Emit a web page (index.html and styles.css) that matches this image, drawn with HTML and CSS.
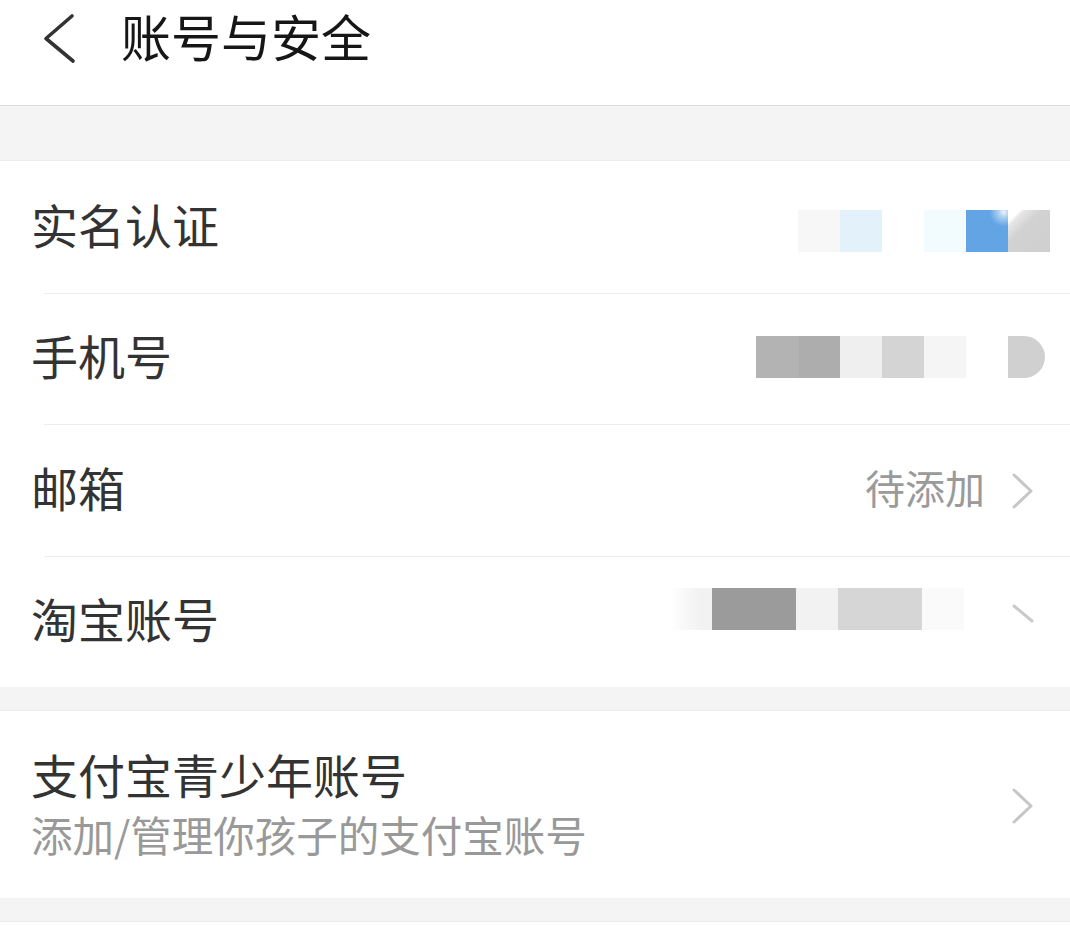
FILE: index.html
```html
<!DOCTYPE html>
<html lang="zh-CN">
<head>
<meta charset="utf-8">
<title>账号与安全</title>
<link rel="stylesheet" href="styles.css">
</head>
<body>
<header class="topbar">
  <svg class="back" viewBox="0 0 40 52" width="40" height="52" aria-hidden="true">
    <polyline points="32,4 6,26.5 33,49" fill="none" stroke="#333" stroke-width="3.6" stroke-linecap="round" stroke-linejoin="round"/>
  </svg>
  <h1 class="title">账号与安全</h1>
</header>
<div class="band band-top"></div>
<section class="group">
  <div class="row">
    <span class="label">实名认证</span>
    <div class="mosaic mosaic-1">
      <i class="px" style="background:#f7f7f7"></i><i class="px" style="background:#e3f1fb"></i><i class="px" style="background:#fff"></i><i class="px" style="background:#f2fbfd"></i><i class="px px-blue"></i><i class="px px-fold"></i>
    </div>
  </div>
  <div class="row">
    <span class="label">手机号</span>
    <div class="mosaic mosaic-2">
      <i class="px" style="background:#b3b3b3;width:43px"></i><i class="px" style="background:#adadad;width:41px"></i><i class="px" style="background:#efefef"></i><i class="px" style="background:#d4d4d4"></i><i class="px" style="background:#f5f5f5"></i><i class="px" style="background:#fff"></i><i class="px px-d"></i>
    </div>
  </div>
  <div class="row">
    <span class="label">邮箱</span>
    <span class="value">待添加</span>
    <svg class="chev chev-3" viewBox="0 0 24 36" width="24" height="36" aria-hidden="true">
      <polyline points="3,2 20,18 3,34" fill="none" stroke="#c6c6c6" stroke-width="3" stroke-linecap="round" stroke-linejoin="round"/>
    </svg>
  </div>
  <div class="row">
    <span class="label">淘宝账号</span>
    <div class="mosaic mosaic-4">
      <i class="px px-fade"></i><i class="px" style="background:#9b9b9b;width:84px"></i><i class="px" style="background:#f2f2f2"></i><i class="px" style="background:#d6d6d6;width:84px"></i><i class="px" style="background:#fafafa"></i>
    </div>
    <svg class="chev chev-half" viewBox="0 0 24 36" width="24" height="36" aria-hidden="true">
      <line x1="3" y1="2" x2="21" y2="17" stroke="#c9c9c9" stroke-width="3" stroke-linecap="round"/>
    </svg>
  </div>
</section>
<div class="band band-mid"></div>
<section class="group">
  <div class="row row-tall">
    <div class="stack">
      <span class="label">支付宝青少年账号</span>
      <span class="sub">添加/管理你孩子的支付宝账号</span>
    </div>
    <svg class="chev chev-5" viewBox="0 0 24 36" width="24" height="36" aria-hidden="true">
      <polyline points="3,2 20,18 3,34" fill="none" stroke="#c6c6c6" stroke-width="3" stroke-linecap="round" stroke-linejoin="round"/>
    </svg>
  </div>
</section>
<div class="band band-bottom"></div>
</body>
</html>
```

FILE: styles.css
```css
* { box-sizing: border-box; }

html, body {
  margin: 0;
  padding: 0;
  background: #fff;
  font-family: "Noto Sans CJK SC", "Noto Sans", sans-serif;
  color: #333;
}

.topbar {
  height: 106px;
  display: flex;
  align-items: center;
  padding-bottom: 36px;
  border-bottom: 1px solid #d9d9d9;
  background: #fff;
}

.back {
  display: block;
  margin-left: 40px;
  margin-top: 6px;
  flex: none;
}

.title {
  margin: 0 0 0 41px;
  font-size: 50px;
  font-weight: 400;
  line-height: 60px;
  color: #161616;
}

.band {
  background: #f4f4f4;
}
.band-top {
  height: 55px;
  border-bottom: 1px solid #ececec;
}
.band-mid {
  height: 24px;
  border-bottom: 1px solid #ececec;
}
.band-bottom {
  height: 24px;
  border-bottom: 1px solid #ececec;
}

.group {
  background: #fff;
}

.row {
  height: 131.5px;
  display: flex;
  align-items: center;
  padding-left: 31px;
  padding-right: 35px;
  padding-bottom: 6px;
}
.row + .row {
  background: linear-gradient(#ececec, #ececec) no-repeat 44px 0 / 100% 1px;
}

.label {
  font-size: 47px;
  line-height: 56px;
  color: #333;
  flex: none;
}

.value {
  margin-left: auto;
  font-size: 40px;
  line-height: 56px;
  color: #9a9a9a;
}

.chev {
  display: block;
  flex: none;
  margin-left: 26px;
}
.chev-3 {
  margin-top: 9px;
}
.chev-5 {
  margin-top: 4px;
}

.mosaic {
  margin-left: auto;
  display: flex;
  height: 42px;
}
.px {
  display: block;
  width: 42px;
  height: 42px;
}
.mosaic-1 {
  margin-right: -15px;
  margin-top: 14px;
}
.mosaic-2 {
  margin-right: -10px;
  margin-top: 3px;
}
.mosaic-4 {
  margin-bottom: 19px;
}
.chev-half {
  margin-left: 47px;
  margin-top: 7px;
}

.px-blue {
  background: radial-gradient(circle at 90% 5%, #e9f3fb 0, #a9cdf0 10%, transparent 26%), #63a5e4;
}
.px-fold {
  background: linear-gradient(135deg, #fff 0, #fff 14%, #e6e6e6 20%, #d2d2d2 40%, #cfcfcf 100%);
}
.px-d {
  width: 37px;
  background: #d0d0d0;
  border-radius: 0 21px 21px 0;
}
.px-fade {
  background: linear-gradient(90deg, #fff 0, #f2f2f2 70%);
}

.row-tall {
  height: 187px;
  padding-bottom: 2px;
}
.stack {
  display: flex;
  flex-direction: column;
  margin-right: auto;
}
.sub {
  margin-top: 4px;
  font-size: 41.5px;
  line-height: 56px;
  color: #999;
}
```
